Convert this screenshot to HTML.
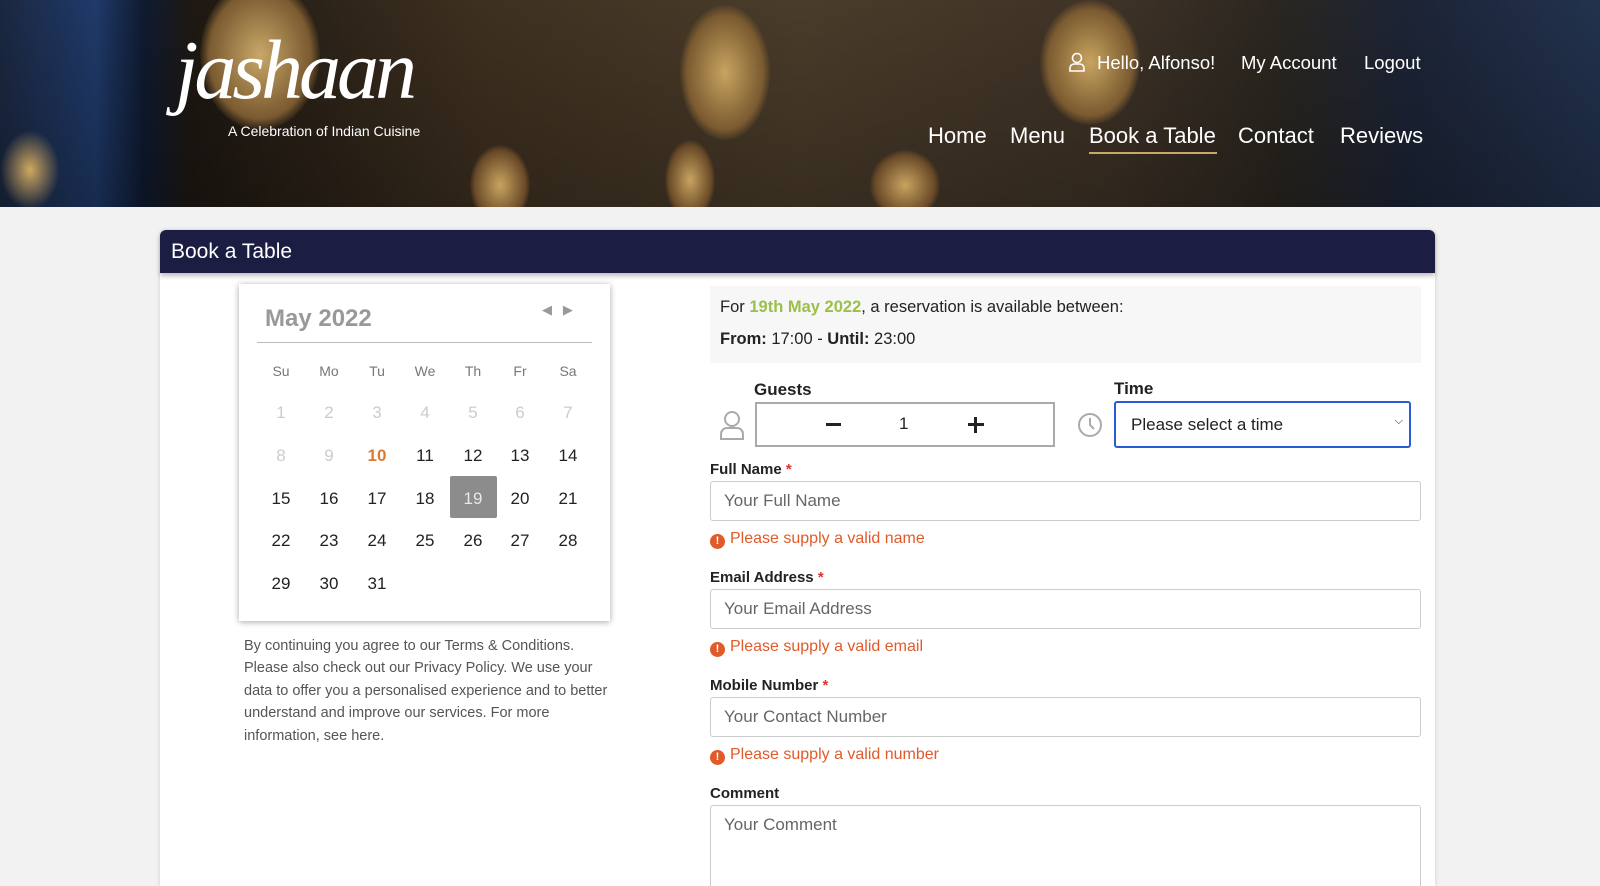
<!DOCTYPE html>
<html><head><meta charset="utf-8"><style>
*{box-sizing:border-box;margin:0;padding:0}
html,body{width:1600px;height:886px;overflow:hidden}
body{background:#f2f2f2;font-family:"Liberation Sans",Arial,sans-serif;color:#222;position:relative}
.hdr{position:absolute;left:0;top:0;width:1600px;height:207px;overflow:hidden;
background:linear-gradient(180deg,rgba(0,0,0,0) 0%,rgba(0,0,0,.25) 100%),linear-gradient(90deg,#1b2740 0%,#1f3a6a 6%,#0f1a30 9%,#1e1812 12%,#3e3020 30%,#4a3c2a 50%,#3e3226 70%,#2a2620 80%,#1c2436 88%,#22324e 100%)}
.hdr .b{position:absolute;border-radius:50%}
.abs{position:absolute}
.w{color:#fff}
.panel{position:absolute;left:160px;top:230px;width:1275px;height:656px;background:#fff;border-radius:6px 6px 0 0;box-shadow:0 0 4px rgba(0,0,0,.15)}
.ttl{position:absolute;left:160px;top:230px;width:1275px;height:43px;background:#1c1d42;border-radius:6px 6px 0 0;color:#fff;font-size:21px;padding:10px 11px;box-shadow:0 3px 5px rgba(0,0,0,.25)}
.cal{position:absolute;left:239px;top:284px;width:371px;height:337px;background:#fff;box-shadow:0 1px 6px rgba(0,0,0,.35)}
.d{position:absolute;width:46px;text-align:center;font-size:17px;color:#222}
.lbl{position:absolute;left:710px;font-size:15px;font-weight:bold;color:#222}
.lbl i{color:#d33;font-style:normal}
.inp{position:absolute;left:710px;width:711px;height:40px;border:1px solid #ccc;border-radius:3px;font-size:17px;color:#666;padding:9px 13px}
.err{position:absolute;left:710px;font-size:16px;color:#e05a2a}
.err b{display:inline-block;width:15px;height:15px;border-radius:50%;background:#e05a2a;color:#fff;font-size:11px;text-align:center;line-height:15px;margin-right:5px;vertical-align:-1px}
</style></head><body>
<div class="hdr">
<div class="b" style="left:200px;top:-20px;width:120px;height:150px;background:radial-gradient(#c8a868,#7a5a30 60%,transparent 72%)"></div>
<div class="b" style="left:680px;top:5px;width:90px;height:135px;background:radial-gradient(#c8a460,#7a5a30 60%,transparent 72%)"></div>
<div class="b" style="left:1040px;top:0px;width:100px;height:125px;background:radial-gradient(#c8a460,#7a5a30 60%,transparent 72%)"></div>
<div class="b" style="left:470px;top:145px;width:60px;height:80px;background:radial-gradient(#c8a460,#6a4a28 60%,transparent 72%)"></div>
<div class="b" style="left:665px;top:140px;width:50px;height:80px;background:radial-gradient(#c8a460,#6a4a28 60%,transparent 72%)"></div>
<div class="b" style="left:870px;top:150px;width:70px;height:70px;background:radial-gradient(#c8a460,#6a4a28 60%,transparent 72%)"></div>
<div class="b" style="left:0;top:130px;width:60px;height:80px;background:radial-gradient(#d0a860,transparent 70%)"></div>
<div class="abs" style="left:175px;top:22px;font-family:'Liberation Serif',serif;font-style:italic;font-size:84px;color:#fff;letter-spacing:-4px">jashaan</div>
<div class="abs w" style="left:228px;top:123px;font-size:14px">A Celebration of Indian Cuisine</div>
<svg class="abs" style="left:1068px;top:52px" width="18" height="20" viewBox="0 0 18 20"><circle cx="9" cy="6" r="4.5" fill="none" stroke="#fff" stroke-width="1.6"/><path d="M2 19v-3a4 4 0 0 1 4-4h6a4 4 0 0 1 4 4v3z" fill="none" stroke="#fff" stroke-width="1.6"/></svg>
<div class="abs w" style="left:1097px;top:52px;font-size:18.5px">Hello, Alfonso!</div>
<div class="abs w" style="left:1241px;top:52px;font-size:18.5px">My Account</div>
<div class="abs w" style="left:1364px;top:52px;font-size:18.5px">Logout</div>
<div class="abs w" style="left:928px;top:123px;font-size:22px">Home</div>
<div class="abs w" style="left:1010px;top:123px;font-size:22px">Menu</div>
<div class="abs w" style="left:1089px;top:123px;font-size:22px">Book a Table</div>
<div class="abs" style="left:1089px;top:152px;width:128px;height:2px;background:#c8a868"></div>
<div class="abs w" style="left:1238px;top:123px;font-size:22px">Contact</div>
<div class="abs w" style="left:1340px;top:123px;font-size:22px">Reviews</div>
</div>
<div class="panel"></div>
<div class="ttl">Book a Table</div>
<div class="cal">
<div class="abs" style="left:26px;top:21px;font-size:24px;font-weight:bold;color:#999">May 2022</div>
<div class="abs" style="left:303px;top:18px;font-size:13px;color:#999">◀&nbsp;&nbsp;&nbsp;▶</div>
<div class="abs" style="left:18px;top:58px;width:335px;height:1px;background:#bbb"></div>
</div>
<div class="abs" style="left:450px;top:476px;width:47px;height:42px;background:#8c8c8c;border-radius:2px"></div>
<div id="days"></div>
<script>
var cx=[281,329,377,425,473,520,568],h=["Su","Mo","Tu","We","Th","Fr","Sa"],s="";
for(var i=0;i<7;i++)s+='<div class="d" style="left:'+(cx[i]-23)+'px;top:363px;font-size:14px;color:#777">'+h[i]+'</div>';
var ry=[403,446,489,531,574];
for(var n=1;n<=31;n++){var r=Math.floor((n-1)/7),c=(n-1)%7;var col=n<10?'#ccc':'#222',ex='';if(n==10){col='#e07a2a';ex='font-weight:bold;'}if(n==19){col='#e8e8e8';}
s+='<div class="d" style="left:'+(cx[c]-23)+'px;top:'+ry[r]+'px;color:'+col+';'+ex+'">'+n+'</div>';}
document.getElementById('days').innerHTML=s;
</script>
<div class="abs" style="left:244px;top:635px;width:370px;font-size:14.5px;line-height:22.4px;color:#555">By continuing you agree to our Terms &amp; Conditions. Please also check out our Privacy Policy. We use your data to offer you a personalised experience and to better understand and improve our services. For more information, see here.</div>
<div class="abs" style="left:710px;top:286px;width:711px;height:77px;background:#f7f7f7"></div>
<div class="abs" style="left:720px;top:298px;font-size:16.5px">For <b style="color:#9bbf4a">19th May 2022</b>, a reservation is available between:</div>
<div class="abs" style="left:720px;top:330px;font-size:16.5px"><b>From:</b> 17:00 - <b>Until:</b> 23:00</div>
<div class="lbl" style="left:754px;top:380px;font-size:17px">Guests</div>
<svg class="abs" style="left:719px;top:410px" width="26" height="30" viewBox="0 0 26 30"><circle cx="13" cy="9" r="7" fill="none" stroke="#aaa" stroke-width="2"/><path d="M2 29v-5a6 6 0 0 1 6-6h10a6 6 0 0 1 6 6v5z" fill="none" stroke="#aaa" stroke-width="2"/></svg>
<div class="abs" style="left:755px;top:402px;width:300px;height:45px;border:2px solid #aaa"></div>
<div class="abs" style="left:826px;top:423px;width:15px;height:3px;background:#222"></div>
<div class="abs" style="left:899px;top:414px;font-size:17px">1</div>
<div class="abs" style="left:968px;top:423px;width:16px;height:3px;background:#222"></div>
<div class="abs" style="left:974px;top:417px;width:3px;height:16px;background:#222"></div>
<div class="lbl" style="left:1114px;top:379px;font-size:17px">Time</div>
<svg class="abs" style="left:1077px;top:412px" width="26" height="26" viewBox="0 0 26 26"><circle cx="13" cy="13" r="11" fill="none" stroke="#aaa" stroke-width="2"/><path d="M13 6v7l4 4" fill="none" stroke="#aaa" stroke-width="2"/></svg>
<div class="abs" style="left:1114px;top:401px;width:297px;height:47px;border:2px solid #2a5bd7;border-radius:3px;font-size:17px;padding:12px 15px">Please select a time<span style="position:absolute;right:6px;top:12px;font-size:11px">⌵</span></div>
<div class="lbl" style="top:461px">Full Name <i>*</i></div>
<div class="inp" style="top:481px">Your Full Name</div>
<div class="err" style="top:530px"><b>!</b>Please supply a valid name</div>
<div class="lbl" style="top:569px">Email Address <i>*</i></div>
<div class="inp" style="top:589px">Your Email Address</div>
<div class="err" style="top:638px"><b>!</b>Please supply a valid email</div>
<div class="lbl" style="top:677px">Mobile Number <i>*</i></div>
<div class="inp" style="top:697px">Your Contact Number</div>
<div class="err" style="top:746px"><b>!</b>Please supply a valid number</div>
<div class="lbl" style="top:785px">Comment</div>
<div class="inp" style="top:805px;height:120px">Your Comment</div>
</body></html>
